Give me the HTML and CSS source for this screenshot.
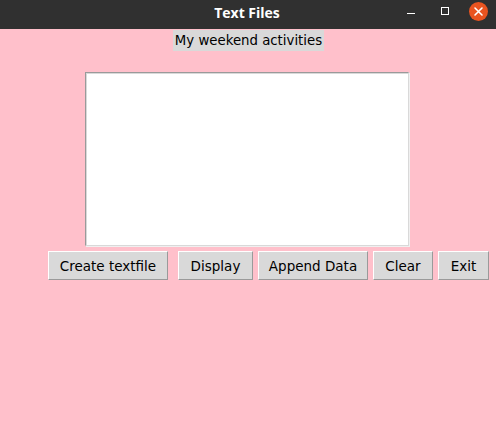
FILE: index.html
```html
<!DOCTYPE html>
<html>
<head>
<meta charset="utf-8">
<link rel="stylesheet" href="styles.css">
</head>
<body>
<div class="window">
  <div class="titlebar">
    <span class="title">Text Files</span>
    <div class="controls">
      <span class="min"></span>
      <span class="max"></span>
      <span class="close">
        <svg width="19" height="19" viewBox="0 0 19 19">
          <circle cx="9.5" cy="9.5" r="9.5" fill="#e95420"/>
          <path d="M6 6 L13 13 M13 6 L6 13" stroke="#ffffff" stroke-width="1.6" stroke-linecap="round"/>
        </svg>
      </span>
    </div>
  </div>
  <div class="content">
    <div class="label-row"><span class="label">My weekend activities</span></div>
    <div class="text-row"><div class="textbox"></div></div>
    <div class="buttons">
      <button class="btn w-create">Create textfile</button>
      <button class="btn w-display">Display</button>
      <button class="btn w-append">Append Data</button>
      <button class="btn w-clear">Clear</button>
      <button class="btn w-exit">Exit</button>
    </div>
  </div>
</div>
</body>
</html>
```
FILE: styles.css
```css
html, body {
  margin: 0;
  padding: 0;
  background: #ffc0cb;
}
.window {
  width: 496px;
  height: 428px;
  display: flex;
  flex-direction: column;
  font-family: "DejaVu Sans", sans-serif;
}
.titlebar {
  height: 29px;
  background: #303030;
  position: relative;
  display: flex;
  align-items: center;
  justify-content: center;
  flex-shrink: 0;
}
.title {
  color: #ffffff;
  font-family: "Open Sans", "DejaVu Sans", sans-serif;
  font-weight: bold;
  font-size: 14px;
  margin-left: -2px;
  margin-top: -5px;
}
.controls {
  position: absolute;
  top: 0;
  right: 0;
  height: 29px;
  width: 96px;
}
.min {
  position: absolute;
  left: 7px;
  top: 13px;
  width: 8px;
  height: 1px;
  background: #ffffff;
}
.max {
  position: absolute;
  left: 41px;
  top: 7px;
  width: 6px;
  height: 6px;
  border: 1px solid #ffffff;
}
.close {
  position: absolute;
  left: 69px;
  top: 2px;
  width: 19px;
  height: 19px;
}
.close svg { display: block; }
.content {
  flex: 1;
  background: #ffc0cb;
}
.label-row {
  display: flex;
  justify-content: center;
  padding-top: 1px;
}
.label {
  display: block;
  background: #d9d9d9;
  color: #000000;
  font-size: 13.3px;
  height: 21px;
  line-height: 21px;
  width: 151px;
  margin-left: 1px;
  text-align: center;
}
.text-row {
  padding-top: 21px;
  padding-left: 85px;
}
.textbox {
  width: 322px;
  height: 172px;
  background: #ffffff;
  border-top: 1px solid #9a9a9a;
  border-left: 1px solid #9a9a9a;
  border-right: 1px solid #d9d9d9;
  border-bottom: 1px solid #d9d9d9;
  box-shadow: inset 1px 1px 0 #d9d9d9, 1px 1px 0 #f0f0f0;
}
.buttons {
  display: flex;
  padding-left: 48px;
  margin-top: 5px;
}
.btn {
  height: 29px;
  box-sizing: border-box;
  background: #d9d9d9;
  border-top: 1px solid #ffffff;
  border-left: 1px solid #ffffff;
  border-right: 1px solid #9a9a9a;
  border-bottom: 1px solid #9a9a9a;
  font-family: "DejaVu Sans", sans-serif;
  font-size: 13.5px;
  color: #000000;
  padding: 0;
  margin: 0;
}
.w-create { width: 120px; margin-right: 10px; }
.w-display { width: 75px; margin-right: 5px; }
.w-append { width: 110px; margin-right: 5px; }
.w-clear { width: 60px; margin-right: 5px; }
.w-exit { width: 51px; }
```
